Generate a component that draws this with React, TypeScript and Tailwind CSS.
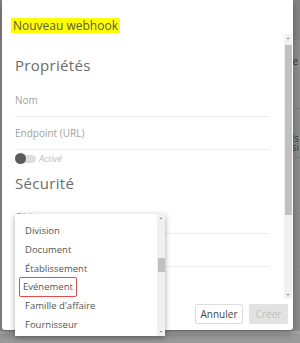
import * as React from 'react';

// Faint page content behind the modal backdrop
function Backdrop(): React.ReactElement {
  return (
    <div className="h-full w-full bg-[#8e8e8e] flex flex-col">
      <div className="h-[40px] bg-[#858585]" />
      <div className="flex justify-end pr-[2px] pt-[14px] text-[10px] text-[#3a3a3a] h-[68px]">e</div>
      <div className="h-px bg-[#808080]" />
      <div className="flex flex-col items-end pt-[25px] text-[10px] leading-[9px] text-[#3a3a3a] h-[48px] pr-[1px]">
        <span>els</span>
        <span>si</span>
      </div>
      <div className="h-px bg-[#808080]" />
      <div className="h-[55px]" />
      <div className="h-px bg-[#878787]" />
      <div className="h-[52px]" />
      <div className="h-px bg-[#878787]" />
      <div className="flex-1" />
      <div className="h-[3px] bg-[#a6a6a6]" />
      <div className="h-[9px] bg-[#9a9a9a]" />
    </div>
  );
}

function Field(props: { label: string; className?: string }): React.ReactElement {
  return (
    <div className={`h-[33px] flex items-center border-b border-[#ececec] ${props.className ?? ''}`}>
      <span className="text-[10px] text-[#a0a0a0]">{props.label}</span>
    </div>
  );
}

function FakeScrollbar(props: { thumbTop: number; thumbHeight: number; className?: string }): React.ReactElement {
  return (
    <div className={`w-[8px] bg-[#f1f1f1] flex flex-col items-center ${props.className ?? ''}`}>
      <svg width="8" height="8" viewBox="0 0 8 8" className="shrink-0">
        <path d="M2.5 5 L4 3.2 L5.5 5 Z" fill="#8a8a8a" />
      </svg>
      <div style={{ height: props.thumbTop }} className="shrink-0" />
      <div style={{ height: props.thumbHeight }} className="w-[7px] bg-[#c1c1c1] shrink-0" />
      <div className="flex-1" />
      <svg width="8" height="8" viewBox="0 0 8 8" className="shrink-0">
        <path d="M2.5 3 L4 4.8 L5.5 3 Z" fill="#8a8a8a" />
      </svg>
    </div>
  );
}

const options = ['Division', 'Document', 'Établissement', 'Evénement', "Famille d'affaire", 'Fournisseur'];

function Dropdown(): React.ReactElement {
  return (
    <div className="absolute left-[13px] top-[180px] w-[150px] h-[122px] bg-white shadow-[0_2px_6px_rgba(0,0,0,0.35)] flex">
      <div className="flex-1 flex flex-col pt-[8px] pl-[10px]">
        {options.map((o) => (
          <div key={o} className="h-[18.7px] flex items-center">
            <span
              className={
                o === 'Evénement'
                  ? 'text-[9.5px] text-[#555] outline outline-[1.5px] outline-[#e24b4b] px-[3px] -ml-[5px] h-[18px] flex items-center rounded-[1px]'
                  : 'text-[9.5px] text-[#555]'
              }
            >
              {o}
            </span>
          </div>
        ))}
      </div>
      <FakeScrollbar thumbTop={36} thumbHeight={14} />
    </div>
  );
}

export default function App(): React.ReactElement {
  return (
    <div className="relative w-[300px] h-[343px] overflow-hidden font-['Open_Sans',sans-serif]">
      <Backdrop />

      {/* Dialog */}
      <div className="absolute left-[2px] top-0 w-[291px] h-[330px] bg-white rounded-b-[3px] shadow-[0_3px_8px_rgba(0,0,0,0.35)] flex flex-col">
        <div className="h-[34px] pl-[9px] pt-[12px]">
          <span className="inline-block bg-[#ffff00] h-[15px] leading-[15px] px-[2px] text-[12px] text-[#5c5c3a]">
            Nouveau webhook
          </span>
        </div>

        <div className="h-[265px] flex relative">
          <div className="flex-1 pl-[13px] pr-[15px] overflow-hidden">
            <div className="pt-[20px] text-[15px] text-[#6b6b6b] tracking-[0.3px] h-[50px]">Propriétés</div>
            <Field label="Nom" className="h-[32px]" />
            <Field label="Endpoint (URL)" className="h-[32px]" />
            <div className="h-[17px] flex items-center gap-[3px]">
              <div className="relative w-[21px] h-[11px] flex items-center">
                <div className="absolute left-[5px] right-0 h-[8px] rounded-full bg-[#dedede]" />
                <div className="relative w-[11px] h-[11px] rounded-full bg-[#5a5a5a]" />
              </div>
              <span className="text-[9px] italic text-[#bdbdbd]">Activé</span>
            </div>
            <div className="pt-[5px] text-[15px] text-[#6b6b6b] tracking-[0.3px] h-[34px]">Sécurité</div>
            <Field label="Objet" className="items-start pt-[9px]" />
            <Field label="Secret" />
            <Field label="Clé" />
          </div>
          <FakeScrollbar thumbTop={3} thumbHeight={170} className="mr-[1px]" />
          <Dropdown />
        </div>

        <div className="flex-1 flex justify-end items-start pt-[5px] pr-[5px] gap-[6px]">
          <button type="button" className="h-[20px] w-[48px] border border-[#dcdcdc] rounded-[2px] bg-white text-[10px] text-[#444]">
            Annuler
          </button>
          <button type="button" className="h-[20px] w-[39px] rounded-[2px] bg-[#e2e2e2] text-[10px] text-[#bdbdbd]">
            Créer
          </button>
        </div>
      </div>
    </div>
  );
}
